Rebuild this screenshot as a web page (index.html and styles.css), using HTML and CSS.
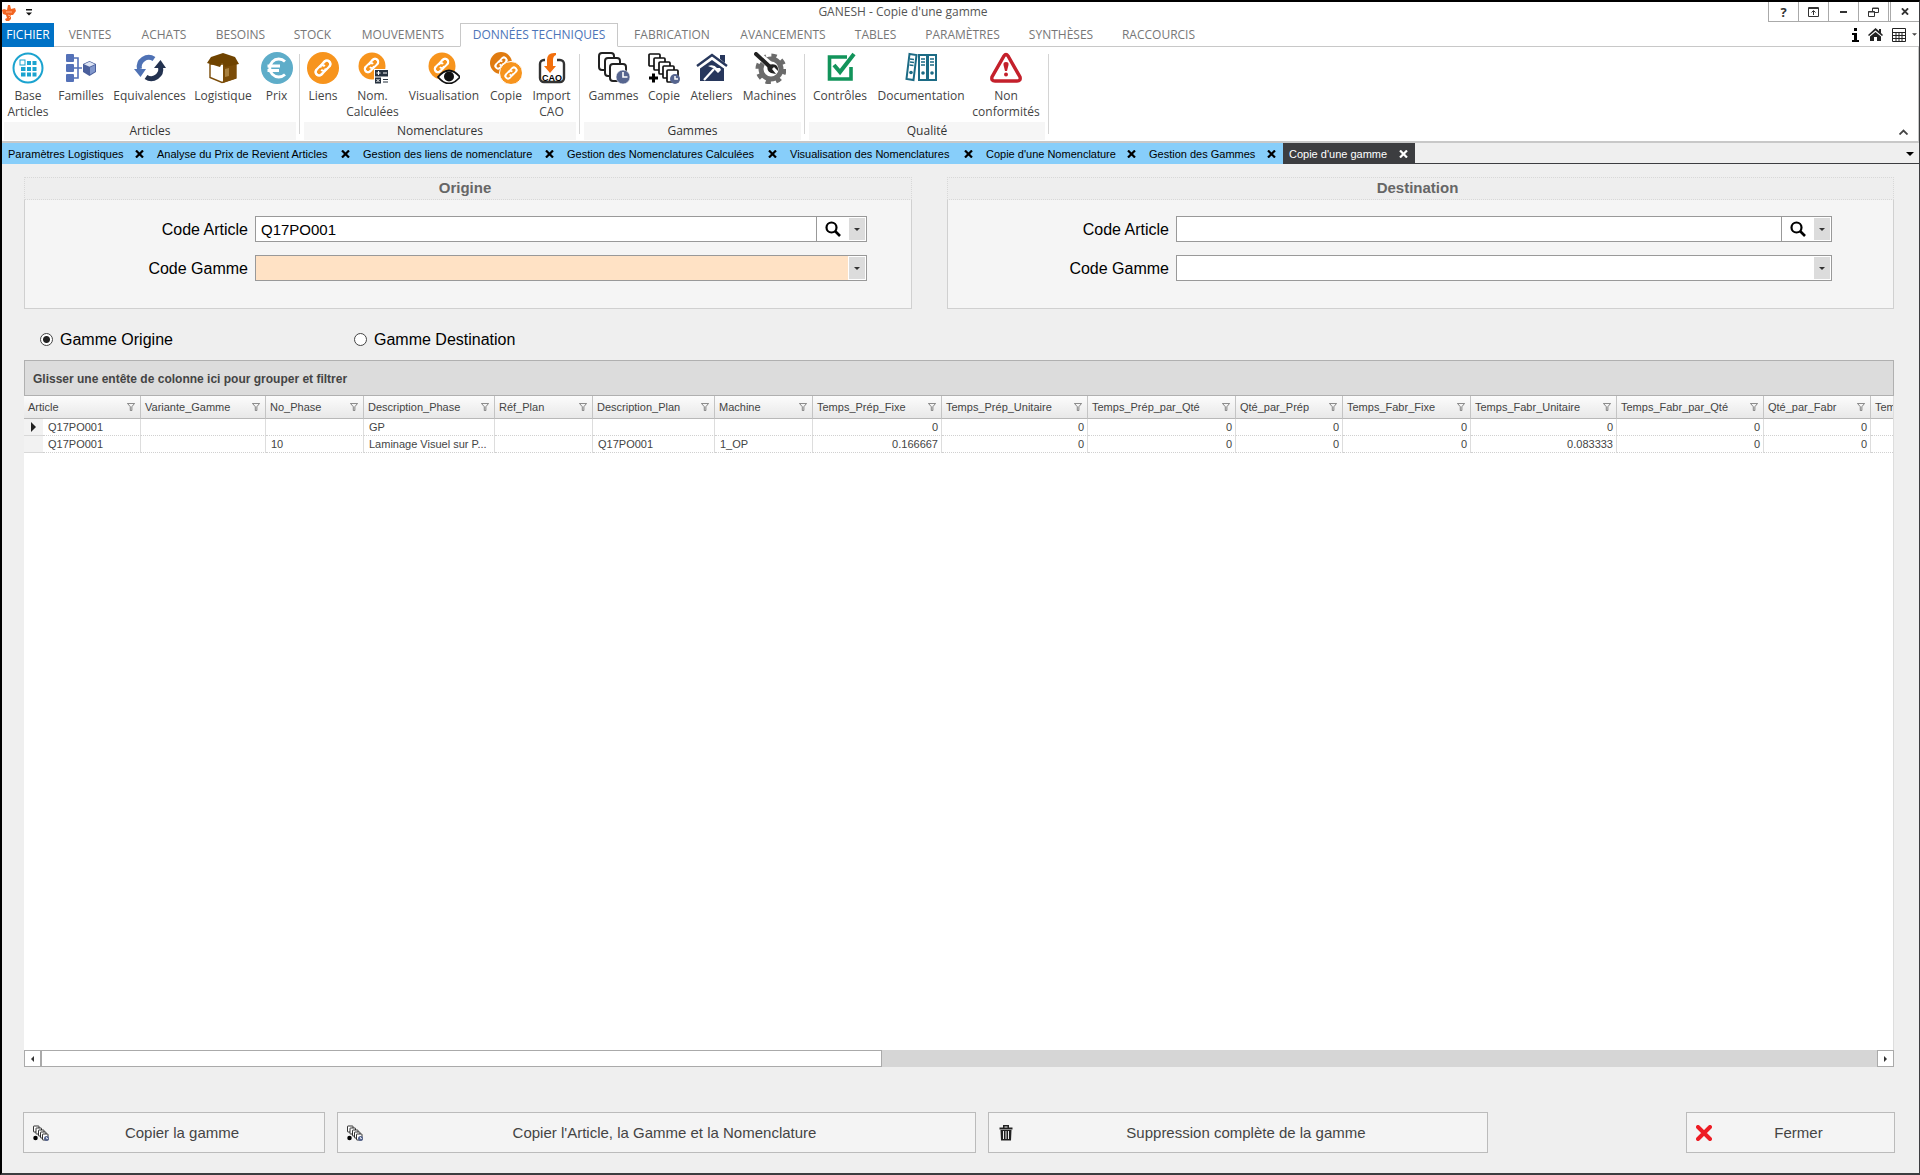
FILE: index.html
```html
<!DOCTYPE html>
<html lang="fr">
<head>
<meta charset="utf-8">
<meta name="viewport" content="width=device-width, initial-scale=1">
<title>GANESH - Copie d'une gamme</title>
<link rel="stylesheet" href="styles.css">
</head>
<body>
<svg class="sprite" aria-hidden="true">
  <symbol id="chain" viewBox="0 0 32 32"><g transform="rotate(-45 16 16)" fill="none" stroke="#fff" stroke-width="2.200"><path d="M12 19.500h-1.500a3.500 3.500 0 0 1 0-7h4.500a3.500 3.500 0 0 1 3.500 3.500"/><path d="M20 12.500h1.500a3.500 3.500 0 0 1 0 7h-4.500a3.500 3.500 0 0 1-3.500-3.500"/><path d="M10.500 12.500a3.500 3.500 0 0 0 0 7h4a3.500 3.500 0 0 0 3-1.500M21.500 19.500a3.500 3.500 0 0 0 0-7h-4a3.500 3.500 0 0 0-3 1.500"/></g></symbol>
  <symbol id="funnel" viewBox="0 0 9 9"><path d="M.5.5h8L5.500 4.200V8.500H3.700V4.200z" fill="none" stroke="#777"/></symbol>
  <symbol id="cross" viewBox="0 0 9 8"><path d="M1 .5l7 7M8 .5l-7 7" stroke="currentColor" stroke-width="2.200" fill="none"/></symbol>
  <symbol id="caret" viewBox="0 0 6 3"><path d="M0 0h6L3 3z" fill="currentColor"/></symbol>
  <symbol id="stack" viewBox="0 0 32 32"><g fill="#fff" stroke="#111" stroke-width="1.700"><rect x="1" y="2" width="11" height="12" rx="1"/><rect x="6" y="6" width="11" height="12" rx="1"/><rect x="11" y="10" width="11" height="12" rx="1"/><rect x="15" y="14" width="11" height="12" rx="1"/><rect x="19" y="18" width="11" height="12" rx="1"/></g><circle cx="27" cy="27" r="5" fill="#56658f"/><path d="M27 24v3h3" stroke="#fff" stroke-width="1.500" fill="none"/></symbol>
</svg>

<div class="window">
  <header class="titlebar">
    <div class="quick">
      <svg width="14" height="16" viewBox="0 0 14 16"><path d="M6 0l2 0 1 4 4-1 1 3-3 4-2 0 0 4-2 2H4l-1-2 2-1-1-3-3-1-1-4 2-1 3 1z" fill="#f26522"/><path d="M4 7h6M6 10l3 1-2 2" stroke="#ffb48a" fill="none"/></svg>
      <svg width="6" height="7" viewBox="0 0 6 7"><path d="M0 0h6v1.500H0zM0 3.500h6L3 6.500z" fill="#111"/></svg>
    </div>
    <h1>GANESH - Copie d'une gamme</h1>
    <div class="window-buttons">
      <button type="button" class="help" aria-label="Aide">?</button>
      <button type="button" aria-label="Affichage du ruban"><svg width="11" height="10" viewBox="0 0 11 10" fill="none" stroke="#333"><path d="M.5.5h10v9H.5zM0 1.500h11M5.500 8V4M3.500 5.500l2-2 2 2"/></svg></button>
      <button type="button" aria-label="Réduire"><svg width="7" height="2"><path d="M0 0h7v2H0z" fill="#333"/></svg></button>
      <button type="button" aria-label="Restaurer"><svg width="11" height="10" viewBox="0 0 11 10" fill="none" stroke="#333"><path d="M4.500 4V1h6v4.500H7M4 1.500h7M.5 4.500h6v5h-6zM0 5h7"/></svg></button>
      <button type="button" class="close" aria-label="Fermer la fenêtre"><svg width="8" height="7"><use href="#cross"/></svg></button>
    </div>
  </header>

  <div class="menu-row">
    <nav class="menu">
      <a href="#" class="file">FICHIER</a><a href="#">VENTES</a><a href="#">ACHATS</a><a href="#">BESOINS</a><a href="#">STOCK</a><a href="#">MOUVEMENTS</a><a href="#" class="active">DONNÉES TECHNIQUES</a><a href="#">FABRICATION</a><a href="#">AVANCEMENTS</a><a href="#">TABLES</a><a href="#">PARAMÈTRES</a><a href="#">SYNTHÈSES</a><a href="#">RACCOURCIS</a>
    </nav>
    <div class="menu-tools">
      <svg width="7" height="14" viewBox="0 0 7 14"><path d="M2 0h3v3H2zM0 5h5v7h2v2H0v-2h2V7H0z" fill="#000"/></svg>
      <svg width="15" height="14" viewBox="0 0 15 14"><path d="M7.500 0L11 3V1h2v4l2 2-1 1-6.500-5.500L1 8 0 7z" fill="#222"/><path d="M7.500 4L13 8.500V13H9V9H6v4H2V8.500z" fill="#222"/></svg>
      <svg width="14" height="14" viewBox="0 0 14 14"><path d="M.5.5h13v13H.5zM0 4.500h14M1 7.500h12M1 10.500h12M4 5v8M7 5v8M10 5v8" fill="none" stroke="#222"/></svg>
      <svg width="5" height="3"><use href="#caret"/></svg>
    </div>
  </div>

  <div class="ribbon">
    <section class="group articles">
      <div class="tools">
        <button type="button"><svg viewBox="0 0 32 32"><circle cx="16" cy="16" r="14.500" fill="#fff" stroke="#1ba3cf" stroke-width="2"/><g fill="#1ba3cf"><path d="M15 9h4v4h-4zM20.500 9h4v4h-4zM9 15h4.500v4H9zM15 15h4v4h-4zM20.500 15h4v4h-4zM9 20.500h4.500v4H9zM15 20.500h4v4h-4zM20.500 20.500h4v4h-4z"/></g><rect x="8" y="8" width="5" height="5" fill="#fff" stroke="#1ba3cf"/></svg>Base<br>Articles</button>
        <button type="button"><svg viewBox="0 0 32 32"><g fill="#5471b8"><rect x="1" y="2" width="8" height="8" rx="1"/><rect x="1" y="12" width="8" height="8" rx="1"/><rect x="1" y="22" width="8" height="8" rx="1"/></g><path d="M9 6h4v20H9M9 16h8" fill="none" stroke="#5471b8" stroke-width="1.600"/><path d="M18 12l6.500-3 6.500 3v8l-6.500 4-6.500-4z" fill="#4a5f9c"/><path d="M19 12.200l5.500-2.400 5.500 2.400-5.500 2.600z" fill="#dde4f4"/><path d="M25 15.500l5-2.500v6.500l-5 3z" fill="#8197cc"/></svg>Familles</button>
        <button type="button"><svg viewBox="0 0 32 32"><path d="M20 7A9.500 9.500 0 0 0 5.500 17" fill="none" stroke="#4f72b5" stroke-width="5"/><path d="M0 17h12l-5.500 8z" fill="#4f72b5"/><path d="M12 25A9.500 9.500 0 0 0 26.500 15" fill="none" stroke="#233250" stroke-width="5"/><path d="M20 16h12l-5.500-8z" fill="#233250"/></svg>Equivalences</button>
        <button type="button"><svg viewBox="0 0 32 32"><path d="M3 12v13.500L15 30.500 29 26V12z" fill="#fff" stroke="#7b4c08" stroke-width="1.400"/><path d="M16 13l13-1v14.500l-13 4.500z" fill="#7b4c08"/><path d="M18 17l4-1v8l-4 1z" fill="#a8803f"/><path d="M4 5l12-4 12 4 4 7-14 3-3-4-2 4L0 11z" fill="#6f4300"/></svg>Logistique</button>
        <button type="button"><svg viewBox="0 0 32 32"><circle cx="16" cy="16" r="16" fill="#5eadc9"/><path d="M24 9.500A9 9 0 1 0 24 22.500M6.500 14H19M6.500 18.500H18" fill="none" stroke="#fff" stroke-width="2.800"/></svg>Prix</button>
      </div>
      <h2>Articles</h2>
    </section>
    <section class="group nomenclatures">
      <div class="tools">
        <button type="button"><svg viewBox="0 0 32 32"><circle cx="16" cy="16" r="16" fill="#f7941d"/><use href="#chain" width="32" height="32"/></svg>Liens</button>
        <button type="button"><svg viewBox="0 0 32 32"><circle cx="15" cy="14" r="13.500" fill="#f7941d"/><use href="#chain" x="0" y="-1" width="29" height="29"/><rect x="17" y="17" width="15" height="15" fill="#fff"/><path d="M18 18h13v6.500H18zM18 25.500h6v6h-6z" fill="#26323f"/><path d="M19.500 21h4M21.500 19v4M26 21h4M19.500 27l3 3M22.500 27l-3 3" stroke="#fff" stroke-width="1"/><path d="M26 27.500h5M26 30h5" stroke="#26323f" stroke-width="1.200"/></svg>Nom.<br>Calculées</button>
        <button type="button"><svg viewBox="0 0 32 32"><circle cx="14" cy="14" r="13.500" fill="#f7941d"/><use href="#chain" x="-1" y="-1" width="29" height="29"/><path d="M10 25q11-13 22 0-11 13-22 0z" fill="#fff" stroke="#111" stroke-width="1.800"/><circle cx="21" cy="24.500" r="5" fill="#111"/></svg>Visualisation</button>
        <button type="button"><svg viewBox="0 0 32 32"><circle cx="11" cy="11" r="11" fill="#e07b10"/><use href="#chain" x="-1" y="-1" width="24" height="24"/><circle cx="21" cy="21" r="11.500" fill="#f7941d" stroke="#fff"/><use href="#chain" x="9" y="9" width="24" height="24"/></svg>Copie</button>
        <button type="button"><svg viewBox="0 0 32 32"><path d="M9 8H8a4 4 0 0 0-4 4v14a4 4 0 0 0 4 4h16a4 4 0 0 0 4-4V12a4 4 0 0 0-4-4h-3" fill="none" stroke="#333" stroke-width="2.400"/><path d="M20 1q-9-1-9 7v6H8l6 7 6-7h-3V8q0-4 3-5z" fill="#f26f0c"/><text x="16" y="29" text-anchor="middle" class="cao">CAO</text></svg>Import<br>CAO</button>
      </div>
      <h2>Nomenclatures</h2>
    </section>
    <section class="group gammes">
      <div class="tools">
        <button type="button"><svg viewBox="0 0 32 32"><g fill="#fff" stroke="#222" stroke-width="2"><rect x="1" y="1" width="15" height="17" rx="3"/><rect x="7" y="6" width="15" height="18" rx="3"/><rect x="12" y="12" width="16" height="17" rx="3"/></g><circle cx="25" cy="25" r="7" fill="#56658f" stroke="#fff" stroke-width=".6"/><path d="M25 20v5h4.500" fill="none" stroke="#fff" stroke-width="1.600"/></svg>Gammes</button>
        <button type="button"><svg viewBox="0 0 32 32"><use href="#stack" width="32" height="32"/><path d="M1 26h9M5.500 21.500v9" stroke="#000" stroke-width="3"/></svg>Copie</button>
        <button type="button"><svg viewBox="0 0 32 32"><path d="M1 14L16 3l15 11" fill="none" stroke="#27375c" stroke-width="2.400"/><path d="M24 3h5v8l-5-4z" fill="#27375c"/><path d="M4 16.500L16 8l12 8.500V29H4z" fill="#27375c"/><path d="M8 28l10-11" stroke="#fff" stroke-width="2.200"/><path d="M12 14q6-2 9 2l3 0 1 2-3 3-5-5z" fill="#fff"/></svg>Ateliers</button>
        <button type="button"><svg viewBox="0 0 32 32"><circle cx="17" cy="17" r="10" fill="none" stroke="#6b6b6b" stroke-width="5"/><circle cx="17" cy="17" r="13.500" fill="none" stroke="#6b6b6b" stroke-width="4" stroke-dasharray="5.300 5.300"/><path d="M2 1l15 13" stroke="#fff" stroke-width="7"/><path d="M2 2l13 12" stroke="#222" stroke-width="4" stroke-linecap="round"/><path d="M14 13q-2 6 3 8l5 1-4-5 2-2 4 4q1-9-10-6z" fill="#222"/></svg>Machines</button>
      </div>
      <h2>Gammes</h2>
    </section>
    <section class="group qualite">
      <div class="tools">
        <button type="button"><svg viewBox="0 0 32 32"><path d="M23 5H5.500v22H27V15" fill="none" stroke="#12945b" stroke-width="3.600"/><path d="M10 13l6 7L30 2" fill="none" stroke="#12945b" stroke-width="4"/></svg>Contrôles</button>
        <button type="button"><svg viewBox="0 0 32 32"><g fill="#fff" stroke="#1c6b85" stroke-width="2"><path d="M4.500 2l7 1-3 25-7-1zM14 3h8v25h-8zM23 3h8v25h-8z"/></g><path d="M5 7l4 .5M5 10l4 .5M4.500 13l4 .5M16 7h4M16 10h4M16 13h4M25 7h4M25 10h4M25 13h4" stroke="#1c6b85" stroke-width="1.500"/><g fill="#1c6b85"><circle cx="6" cy="20.500" r="1.800"/><circle cx="18" cy="21" r="1.800"/><circle cx="27" cy="21" r="1.800"/></g></svg>Documentation</button>
        <button type="button"><svg viewBox="0 0 32 32"><path d="M14 4q2-3 4 0l12 21q1 4-3 4H5q-4 0-3-4z" fill="#fff" stroke="#c4202b" stroke-width="3.400"/><path d="M16 10q3 0 2.500 3L17 19h-2l-1.500-6q-.5-3 2.500-3z" fill="#c4202b"/><circle cx="16" cy="22.500" r="2" fill="#c4202b"/></svg>Non<br>conformités</button>
      </div>
      <h2>Qualité</h2>
    </section>
    <button type="button" class="collapse" aria-label="Réduire le ruban"><svg width="9" height="6" viewBox="0 0 9 6"><path d="M.5 5.500l4-4 4 4" fill="none" stroke="#444" stroke-width="1.800"/></svg></button>
  </div>

  <div class="doc-row">
    <div class="doc-tabs">
      <div class="doc"><a href="#">Paramètres Logistiques</a><button type="button" aria-label="Fermer l'onglet"><svg><use href="#cross"/></svg></button></div>
      <div class="doc"><a href="#">Analyse du Prix de Revient Articles</a><button type="button" aria-label="Fermer l'onglet"><svg><use href="#cross"/></svg></button></div>
      <div class="doc"><a href="#">Gestion des liens de nomenclature</a><button type="button" aria-label="Fermer l'onglet"><svg><use href="#cross"/></svg></button></div>
      <div class="doc"><a href="#">Gestion des Nomenclatures Calculées</a><button type="button" aria-label="Fermer l'onglet"><svg><use href="#cross"/></svg></button></div>
      <div class="doc"><a href="#">Visualisation des Nomenclatures</a><button type="button" aria-label="Fermer l'onglet"><svg><use href="#cross"/></svg></button></div>
      <div class="doc"><a href="#">Copie d'une Nomenclature</a><button type="button" aria-label="Fermer l'onglet"><svg><use href="#cross"/></svg></button></div>
      <div class="doc"><a href="#">Gestion des Gammes</a><button type="button" aria-label="Fermer l'onglet"><svg><use href="#cross"/></svg></button></div>
      <div class="doc current"><a href="#">Copie d'une gamme</a><button type="button" aria-label="Fermer l'onglet"><svg><use href="#cross"/></svg></button></div>
    </div>
    <button type="button" class="doc-more" aria-label="Liste des onglets"><svg width="8" height="4"><use href="#caret"/></svg></button>
  </div>

  <main>
    <div class="panels">
      <section class="panel origin">
        <h2>Origine</h2>
        <div class="fields">
          <label for="oa">Code Article</label>
          <div class="field"><input id="oa" type="text" value="Q17PO001"><button type="button" class="search" aria-label="Rechercher"><svg width="16" height="16" viewBox="0 0 16 16"><circle cx="6.500" cy="6.500" r="5" fill="none" stroke="#000" stroke-width="2.200"/><path d="M10 10l5 5" stroke="#000" stroke-width="2.600"/></svg></button><button type="button" class="drop" aria-label="Ouvrir la liste"><svg width="6" height="3"><use href="#caret"/></svg></button></div>
          <label for="og">Code Gamme</label>
          <div class="field required"><select id="og"><option></option></select><span class="drop"><svg width="6" height="3"><use href="#caret"/></svg></span></div>
        </div>
      </section>
      <section class="panel destination">
        <h2>Destination</h2>
        <div class="fields">
          <label for="da">Code Article</label>
          <div class="field"><input id="da" type="text"><button type="button" class="search" aria-label="Rechercher"><svg width="16" height="16" viewBox="0 0 16 16"><circle cx="6.500" cy="6.500" r="5" fill="none" stroke="#000" stroke-width="2.200"/><path d="M10 10l5 5" stroke="#000" stroke-width="2.600"/></svg></button><button type="button" class="drop" aria-label="Ouvrir la liste"><svg width="6" height="3"><use href="#caret"/></svg></button></div>
          <label for="dg">Code Gamme</label>
          <div class="field"><select id="dg"><option></option></select><span class="drop"><svg width="6" height="3"><use href="#caret"/></svg></span></div>
        </div>
      </section>
    </div>

    <div class="radios">
      <label><input type="radio" name="gamme" checked>Gamme Origine</label>
      <label><input type="radio" name="gamme">Gamme Destination</label>
    </div>

    <div class="grid">
      <div class="group-bar">Glisser une entête de colonne ici pour grouper et filtrer</div>
      <div class="grid-body">
        <table>
          <colgroup><col class="w19"><col class="w98"><col class="w125"><col class="w98"><col class="w131"><col class="w98"><col class="w122"><col class="w98"><col class="w129"><col class="w146"><col class="w148"><col class="w107"><col class="w128"><col class="w146"><col class="w147"><col class="w107"><col class="w128"></colgroup>
          <thead><tr>
            <th colspan="2"><div>Article<svg><use href="#funnel"/></svg></div></th>
            <th><div>Variante_Gamme<svg><use href="#funnel"/></svg></div></th>
            <th><div>No_Phase<svg><use href="#funnel"/></svg></div></th>
            <th><div>Description_Phase<svg><use href="#funnel"/></svg></div></th>
            <th><div>Réf_Plan<svg><use href="#funnel"/></svg></div></th>
            <th><div>Description_Plan<svg><use href="#funnel"/></svg></div></th>
            <th><div>Machine<svg><use href="#funnel"/></svg></div></th>
            <th><div>Temps_Prép_Fixe<svg><use href="#funnel"/></svg></div></th>
            <th><div>Temps_Prép_Unitaire<svg><use href="#funnel"/></svg></div></th>
            <th><div>Temps_Prép_par_Qté<svg><use href="#funnel"/></svg></div></th>
            <th><div>Qté_par_Prép<svg><use href="#funnel"/></svg></div></th>
            <th><div>Temps_Fabr_Fixe<svg><use href="#funnel"/></svg></div></th>
            <th><div>Temps_Fabr_Unitaire<svg><use href="#funnel"/></svg></div></th>
            <th><div>Temps_Fabr_par_Qté<svg><use href="#funnel"/></svg></div></th>
            <th><div>Qté_par_Fabr<svg><use href="#funnel"/></svg></div></th>
            <th><div>Tem</div></th>
          </tr></thead>
          <tbody>
            <tr><td class="mark"><svg width="5" height="10" viewBox="0 0 5 10"><path d="M0 0l5 5-5 5z" fill="#222"/></svg></td><td>Q17PO001</td><td></td><td></td><td>GP</td><td></td><td></td><td></td><td class="n">0</td><td class="n">0</td><td class="n">0</td><td class="n">0</td><td class="n">0</td><td class="n">0</td><td class="n">0</td><td class="n">0</td><td></td></tr>
            <tr><td class="mark"></td><td>Q17PO001</td><td></td><td>10</td><td>Laminage Visuel sur P...</td><td></td><td>Q17PO001</td><td>1_OP</td><td class="n">0.166667</td><td class="n">0</td><td class="n">0</td><td class="n">0</td><td class="n">0</td><td class="n">0.083333</td><td class="n">0</td><td class="n">0</td><td></td></tr>
          </tbody>
        </table>
      </div>
      <div class="scrollbar">
        <button type="button" aria-label="Défiler à gauche"><svg width="3" height="6" viewBox="0 0 3 6"><path d="M3 0v6L0 3z" fill="#333"/></svg></button>
        <div class="track"><div class="thumb"></div></div>
        <button type="button" aria-label="Défiler à droite"><svg width="3" height="6" viewBox="0 0 3 6"><path d="M0 0v6l3-3z" fill="#333"/></svg></button>
      </div>
    </div>

    <div class="actions">
      <button type="button"><svg viewBox="0 0 32 32"><use href="#stack" width="32" height="32"/><circle cx="5" cy="26" r="4.500"/></svg><span>Copier la gamme</span></button>
      <button type="button"><svg viewBox="0 0 32 32"><use href="#stack" width="32" height="32"/><circle cx="5" cy="26" r="4.500"/></svg><span>Copier l'Article, la Gamme et la Nomenclature</span></button>
      <button type="button"><svg viewBox="0 0 16 16"><path d="M1.500 2.500h13v2h-13zM5 0h6v2.500H9.500V1.500h-3v1H5zM2.500 5h11l-.5 10.500H3z" fill="#222"/><path d="M5.500 6v8M8 6v8M10.500 6v8" stroke="#eee"/></svg><span>Suppression complète de la gamme</span></button>
      <button type="button" class="quit"><svg viewBox="0 0 16 16"><path d="M2 2l12 12M14 2L2 14" stroke="#ed1c24" stroke-width="4" stroke-linecap="round"/></svg><span>Fermer</span></button>
    </div>
  </main>
</div>
</body>
</html>
```

FILE: styles.css
```css
* { box-sizing: border-box; }
body { margin: 0; font-family: "Liberation Sans", Arial, sans-serif; color: #000; }
h1, h2 { margin: 0; font-weight: normal; }
a { color: inherit; text-decoration: none; }
button { font: inherit; color: inherit; background: none; border: 0; padding: 0; margin: 0; }
svg { flex: none; }
.sprite { position: absolute; width: 0; height: 0; }
.window { min-height: 100vh; display: flex; flex-direction: column; background: #efefef; border: 2px solid #000; border-right: 1px solid #3c3d40; border-bottom-color: #3c3d40; }

/* title bar */
.titlebar { display: flex; height: 21px; background: #fff; font-family: "Open Sans", "Noto Sans", sans-serif; }
.quick { display: flex; align-items: center; gap: 10px; width: 36px; }
h1 { flex: 1; text-align: center; font-size: 12px; line-height: 20px; color: #555; }
.window-buttons { display: flex; height: 20px; color: #333; }
.window-buttons button { width: 30px; border: solid #aaa; border-width: 0 0 1px 1px; display: flex; align-items: center; justify-content: center; }
.window-buttons .help { font-weight: bold; font-size: 13px; line-height: 16px; }
.window-buttons .close { border-left: 3px double #aaa; width: 31px; }

/* menu */
.menu-row { display: flex; height: 24px; background: #fff; }
.menu { display: grid; grid-template-columns: 52px 72px 76px 77px 67px 114px 158px 108px 114px 71px 103px 94px 101px; font-family: "Open Sans", "Noto Sans", sans-serif; font-size: 12px; line-height: 23px; color: #777; text-align: center; white-space: nowrap; }
.menu a { border-bottom: 1px solid #c8c8c8; }
.menu .file { background: #0072c6; color: #fff; border-color: #0072c6; }
.menu .active { color: #4c74b8; border: 1px solid #c8c8c8; border-bottom-color: #fff; line-height: 22px; }
.menu-tools { flex: 1; display: flex; justify-content: flex-end; align-items: center; gap: 9px; padding-right: 2px; border-bottom: 1px solid #c8c8c8; }
.menu-tools svg:last-child { margin-left: -3px; color: #444; }

/* ribbon */
.ribbon { display: flex; height: 96px; background: #fff; border-bottom: 2px solid #c8c8c8; border-right: 1px solid #c8c8c8; padding-left: 2px; font-family: "Open Sans", "Noto Sans", sans-serif; font-size: 12px; line-height: 16px; color: #444; }
.group { position: relative; display: flex; flex-direction: column; margin-right: 8px; }
.group::after { content: ""; position: absolute; right: -4px; top: 7px; height: 80px; width: 1px; background: #d4d4d4; }
.tools { flex: 1; display: grid; align-items: start; padding-top: 5px; }
.tools button { display: block; text-align: center; white-space: nowrap; }
.tools svg { display: block; width: 32px; height: 32px; margin: 0 auto 4px; }
.articles .tools { grid-template-columns: 48px 58px 79px 68px 39px; }
.nomenclatures .tools { grid-template-columns: 38px 61px 82px 42px 49px; }
.gammes .tools { grid-template-columns: 59px 42px 53px 63px; }
.qualite .tools { grid-template-columns: 62px 100px 70px; padding-right: 4px; }
.group h2 { height: 18px; margin-bottom: 1px; background: #f6f6f6; font-size: 12px; line-height: 18px; text-align: center; color: #333; }
.cao { font: bold 9px "Liberation Sans", Arial, sans-serif; fill: #000; }
.collapse { margin: 0 10px 6px auto; align-self: flex-end; display: flex; }

/* document tabs */
.doc-row { display: flex; justify-content: space-between; height: 21px; border-bottom: 1px solid #3c3d40; }
.doc-tabs { display: grid; grid-template-columns: 149px 206px 204px 223px 196px 163px 140px 132px; font-size: 11px; line-height: 20px; }
.doc { display: flex; align-items: center; justify-content: space-between; padding: 1px 7px 0 6px; background: #87cefa; white-space: nowrap; }
.doc svg { display: block; width: 9px; height: 8px; }
.current { background: #3c3d40; color: #fff; }
.doc-more { padding: 2px 5px 0; }
.doc-more svg { display: block; }

/* form panels */
main { flex: 1; display: flex; flex-direction: column; padding: 13px 25px 20px 22px; }
.panels { display: grid; grid-template-columns: 888fr 947fr; gap: 35px; }
.panel { background: #f5f5f5; border: 1px solid #d0d0d0; border-top: 0; }
.panel h2 { height: 23px; margin: 0 -1px; padding-right: 6px; background: #eee; border: 1px dotted #d8d8d8; font-size: 15px; font-weight: bold; line-height: 20px; text-align: center; color: #666; }
.fields { display: grid; grid-template-columns: 223px 1fr; column-gap: 7px; row-gap: 13px; align-items: center; padding: 16px 44px 27px 0; font-size: 16px; }
.destination .fields { padding-right: 61px; grid-template-columns: 221px 1fr; }
.fields label { text-align: right; line-height: 24px; padding-top: 2px; }
.field { display: flex; height: 26px; border: 1px solid #999; background: #fff; }
.field input, .field select { flex: 1; min-width: 0; border: 0; margin: 0; padding: 0 5px; background: transparent; font: 15px "Liberation Sans", Arial, sans-serif; color: #000; appearance: none; outline: 0; }
.required select { background: #ffe2c5; }
.search { width: 32px; border-left: 1px solid #999; display: flex; align-items: center; justify-content: center; }
.drop { width: 16px; margin: 1px; background: #dcdcdc; color: #333; display: flex; align-items: center; justify-content: center; }

.radios { display: flex; padding: 20px 0 10px 16px; font-size: 16px; line-height: 21px; }
.radios label { width: 314px; display: flex; align-items: center; }
.radios input { appearance: none; width: 13px; height: 13px; margin: 0 7px 0 0; border: 1px solid #444; border-radius: 50%; background: #fff; }
.radios input:checked { background: radial-gradient(circle, #222 3px, #fff 4px); }

/* data grid */
.grid { flex: 1; display: flex; flex-direction: column; min-width: 0; }
.group-bar { height: 36px; border: 1px solid #b0b0b0; background: #dcdcdc; padding-left: 8px; font-size: 12px; font-weight: bold; line-height: 37px; color: #444; }
.grid-body { flex: 1; background: #fff; overflow: hidden; border-right: 1px solid #ddd; width: 0; min-width: 100%; }
table { table-layout: fixed; width: 1955px; border-spacing: 0; font-size: 11px; color: #444; }
.w19 { width: 19px; } .w98 { width: 98px; } .w107 { width: 107px; } .w122 { width: 122px; } .w125 { width: 125px; } .w128 { width: 128px; } .w129 { width: 129px; } .w131 { width: 131px; } .w146 { width: 146px; } .w147 { width: 147px; } .w148 { width: 148px; }
th { height: 23px; padding: 0 5px 0 4px; font-weight: normal; text-align: left; background: linear-gradient(#fcfcfc, #e8e8e8); border-right: 1px solid #c4c4c4; border-bottom: 1px solid #b8b8b8; }
th div { display: flex; align-items: center; justify-content: space-between; }
th svg { width: 8px; height: 8px; }
td { height: 17px; line-height: 16px; padding: 0 3px 0 5px; border-right: 1px solid #ddd; border-bottom: 1px dotted #d0d0d0; white-space: nowrap; overflow: hidden; }
.n { text-align: right; }
.mark { background: #f2f2f2; border-right: 0; border-bottom: 1px solid #d8d8d8; padding: 0 0 0 7px; }
.mark svg { display: block; }
.scrollbar { display: flex; height: 17px; background: #d6d6d6; }
.scrollbar button { width: 17px; border: 1px solid #aaa; background: #fff; display: flex; align-items: center; justify-content: center; }
.track { flex: 1; display: flex; }
.thumb { width: 45.8%; background: #fff; border: 1px solid #aaa; }

/* actions */
.actions { display: grid; grid-template-columns: 302fr 639fr 500fr 174fr 209fr; gap: 12px; margin: 45px -1px 0; }
.actions button { display: flex; align-items: center; height: 41px; padding: 0 9px; border: 1px solid #bbb; background: #f4f4f4; font-size: 15px; color: #444; }
.actions svg { width: 16px; height: 16px; }
.actions span { flex: 1; text-align: center; }
.actions .quit { grid-column: 5; }
```
